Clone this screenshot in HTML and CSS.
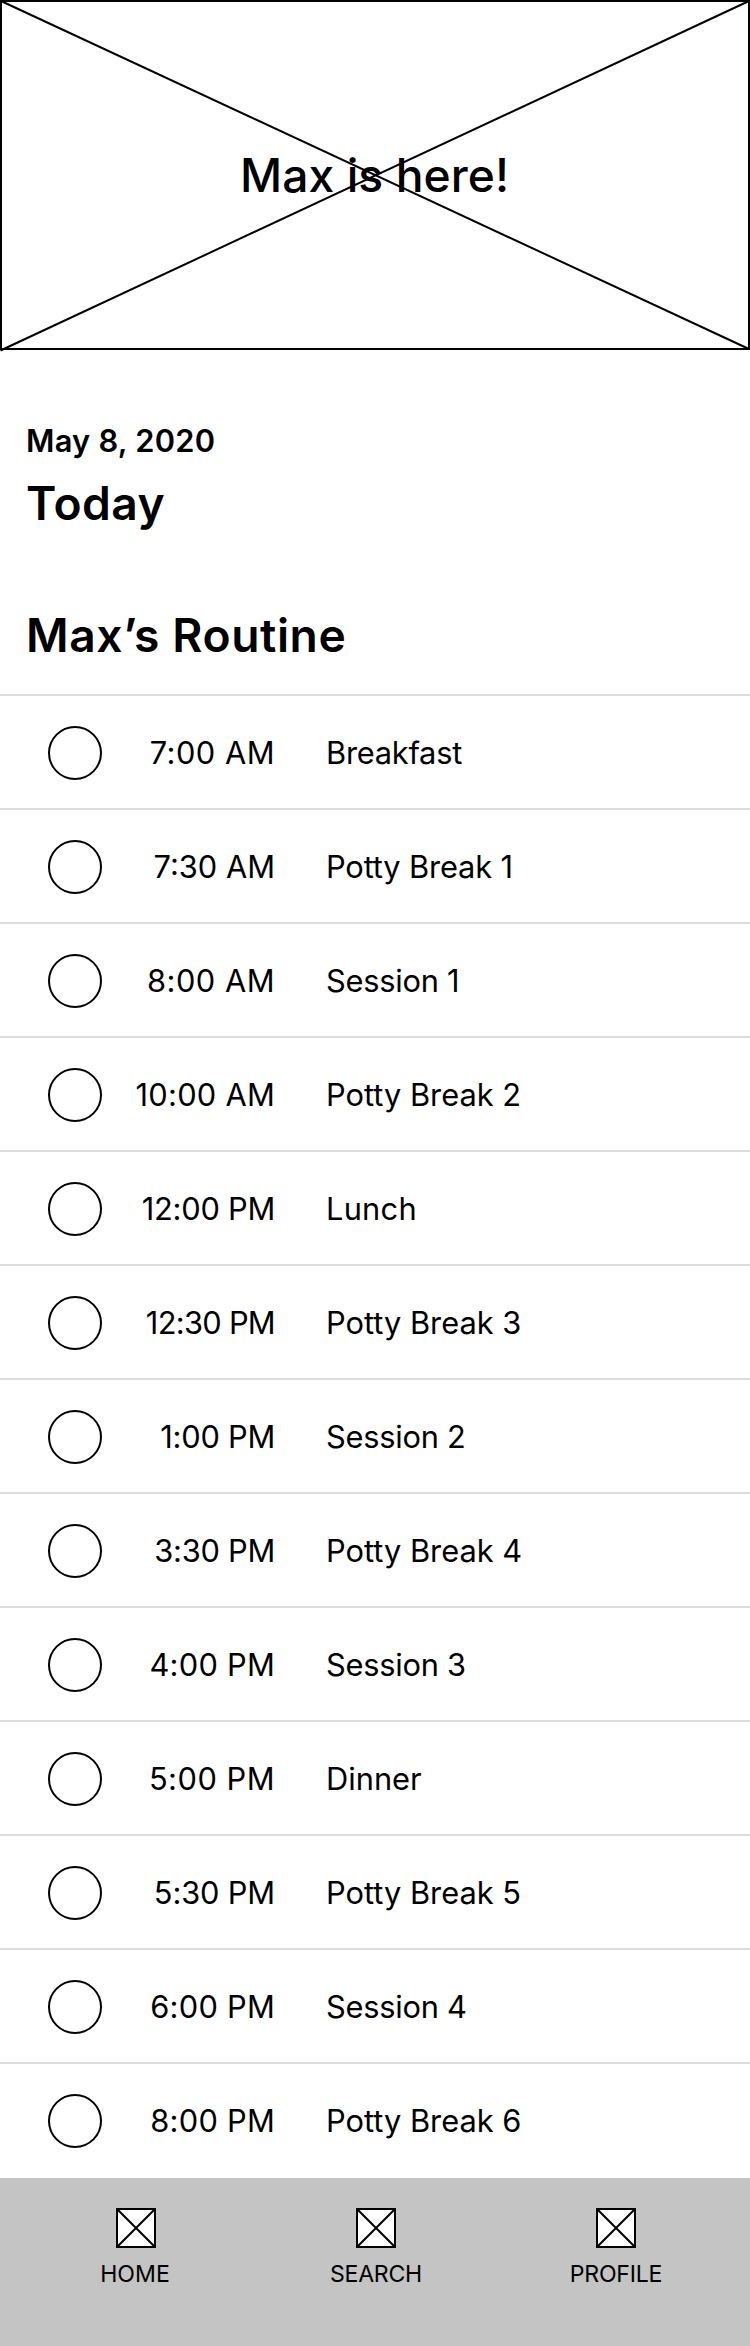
FILE: index.html
```html
<!DOCTYPE html>
<html lang="en">
<head>
<meta charset="utf-8">
<title>Max’s Routine</title>
<link rel="stylesheet" href="styles.css">
</head>
<body>
<header class="hero">
  <svg class="hero-cross" viewBox="0 0 750 352" width="750" height="352" aria-hidden="true">
    <path d="M1 1L749 349M749 1L0.5 350.5" fill="none" stroke="#000" stroke-width="2"/>
  </svg>
  <span class="hero-title">Max is here!</span>
</header>
<section class="intro">
  <div class="date">May 8, 2020</div>
  <h1 class="heading">Today</h1>
  <h2 class="heading heading-routine">Max’s Routine</h2>
</section>
<ul class="routine">
  <li class="row"><span class="check"></span><span class="time wide">7:00 AM</span><span class="name tight">Breakfast</span></li>
  <li class="row"><span class="check"></span><span class="time">7:30 AM</span><span class="name snug">Potty Break 1</span></li>
  <li class="row"><span class="check"></span><span class="time wide">8:00 AM</span><span class="name tight">Session 1</span></li>
  <li class="row"><span class="check"></span><span class="time loose">10:00 AM</span><span class="name">Potty Break 2</span></li>
  <li class="row"><span class="check"></span><span class="time tight">12:00 PM</span><span class="name loose">Lunch</span></li>
  <li class="row"><span class="check"></span><span class="time tighter">12:30 PM</span><span class="name">Potty Break 3</span></li>
  <li class="row"><span class="check"></span><span class="time tight">1:00 PM</span><span class="name tight">Session 2</span></li>
  <li class="row"><span class="check"></span><span class="time tight">3:30 PM</span><span class="name">Potty Break 4</span></li>
  <li class="row"><span class="check"></span><span class="time loose">4:00 PM</span><span class="name tight">Session 3</span></li>
  <li class="row"><span class="check"></span><span class="time wide">5:00 PM</span><span class="name">Dinner</span></li>
  <li class="row"><span class="check"></span><span class="time snug">5:30 PM</span><span class="name">Potty Break 5</span></li>
  <li class="row"><span class="check"></span><span class="time loose">6:00 PM</span><span class="name tight">Session 4</span></li>
  <li class="row"><span class="check"></span><span class="time loose">8:00 PM</span><span class="name">Potty Break 6</span></li>
</ul>
<nav class="tabs">
  <a class="tab tab-home"><svg class="tab-icon" viewBox="0 0 40 40"><path d="M1 1H39V39H1ZM1 1L39 39M39 1L1 39" fill="#fff" stroke="#000" stroke-width="2"/></svg><span class="tab-label">HOME</span></a>
  <a class="tab"><svg class="tab-icon" viewBox="0 0 40 40"><path d="M1 1H39V39H1ZM1 1L39 39M39 1L1 39" fill="#fff" stroke="#000" stroke-width="2"/></svg><span class="tab-label tight">SEARCH</span></a>
  <a class="tab"><svg class="tab-icon" viewBox="0 0 40 40"><path d="M1 1H39V39H1ZM1 1L39 39M39 1L1 39" fill="#fff" stroke="#000" stroke-width="2"/></svg><span class="tab-label tight">PROFILE</span></a>
</nav>
</body>
</html>
```
FILE: styles.css
```css
* {
  box-sizing: border-box;
}

body {
  margin: 0;
  width: 750px;
  background: #fff;
  color: #000;
  font-family: Inter, "Liberation Sans", sans-serif;
  font-size: 30.8px;
}

.hero {
  position: relative;
  display: flex;
  align-items: center;
  justify-content: center;
  height: 350px;
  border: 2px solid #000;
}

.hero-cross {
  position: absolute;
  top: -2px;
  left: -2px;
}

.hero-title {
  position: relative;
  padding-right: 1px;
  font-size: 46.2px;
  font-weight: 500;
  letter-spacing: 0.06px;
}

.intro {
  padding: 71px 26px 31px;
}

.date {
  font-weight: 600;
  line-height: 40px;
  letter-spacing: 0.25px;
}

.heading {
  margin: 14px 0 0;
  font-size: 46.2px;
  font-weight: 600;
  line-height: 56px;
  letter-spacing: 0.5px;
}

.heading-routine {
  margin-top: 76px;
  letter-spacing: 0.6px;
}

.routine {
  margin: 0;
  padding: 0 0 2px;
  list-style: none;
}

.row {
  display: flex;
  align-items: center;
  height: 114px;
  padding: 2px 48px 0;
  border-top: 2px solid #dcdcdc;
}

.check {
  width: 54px;
  height: 54px;
  border: 2px solid #000;
  border-radius: 50%;
}

.time,
.name {
  line-height: 38px;
}

.time {
  width: 173px;
  margin-right: 51px;
  text-align: right;
}

.wide { letter-spacing: 0.5px; }
.loose { letter-spacing: 0.25px; }
.snug { letter-spacing: -0.15px; }
.tight { letter-spacing: -0.25px; }
.tighter { letter-spacing: -0.7px; }

.tabs {
  display: flex;
  height: 168px;
  padding: 30px 14px 0 16px;
  background: #c4c4c4;
}

.tab {
  display: flex;
  flex-direction: column;
  align-items: center;
  gap: 11px;
  width: 240px;
}

.tab-icon {
  width: 40px;
  height: 40px;
}

.tab-label {
  font-size: 23.1px;
  line-height: 30px;
}

.tab-home .tab-label {
  margin-right: 2px;
}
```
